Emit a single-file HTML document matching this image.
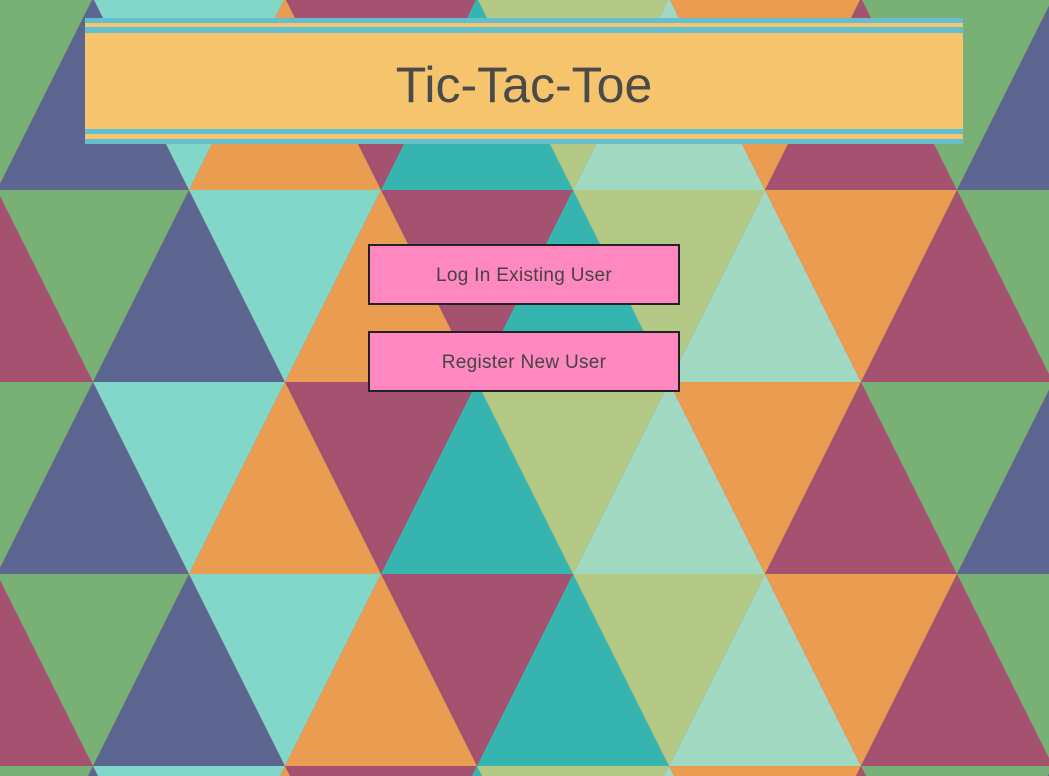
<!DOCTYPE html>
<html><head><meta charset="utf-8"><style>
html,body{margin:0;padding:0;width:1049px;height:776px;overflow:hidden;background:#a4526f}
svg.bg{position:absolute;left:0;top:0;display:block}
.banner{position:absolute;left:85px;top:18px;width:878px;height:126px;background:#f7c46e;overflow:hidden}
.s{position:absolute;left:0;width:100%;background:#62bfcf}
h1{position:absolute;left:0;top:0;width:100%;margin:0;text-align:center;font:50px "Liberation Sans",sans-serif;letter-spacing:0px;color:#4a4a4a;line-height:1;padding-top:42px}
.btn{position:absolute;left:368px;width:308px;height:57px;border:2px solid #222;background:#ff88c0;color:#444;font:19px "Liberation Sans",sans-serif;letter-spacing:0.3px;text-align:center;line-height:60px}
</style></head><body>
<svg class="bg" width="1049" height="776" viewBox="0 0 1049 776">
<defs><g id="r">
<polygon fill="#78b076" points="-99,-2 93,-2 -3,190"/>
<polygon fill="#5c6690" points="-3,190 189,190 93,-2"/>
<polygon fill="#82d8c8" points="93,-2 285,-2 189,190"/>
<polygon fill="#ea9c50" points="189,190 381,190 285,-2"/>
<polygon fill="#a4526f" points="285,-2 477,-2 381,190"/>
<polygon fill="#36b5b0" points="381,190 573,190 477,-2"/>
<polygon fill="#b3c985" points="477,-2 669,-2 573,190"/>
<polygon fill="#a0d8c2" points="573,190 765,190 669,-2"/>
<polygon fill="#ea9c50" points="669,-2 861,-2 765,190"/>
<polygon fill="#a4526f" points="765,190 957,190 861,-2"/>
<polygon fill="#78b076" points="861,-2 1053,-2 957,190"/>
<polygon fill="#5c6690" points="957,190 1149,190 1053,-2"/>
<polygon fill="#a4526f" points="-99,382 93,382 -3,190"/>
<polygon fill="#78b076" points="-3,190 189,190 93,382"/>
<polygon fill="#5c6690" points="93,382 285,382 189,190"/>
<polygon fill="#82d8c8" points="189,190 381,190 285,382"/>
<polygon fill="#ea9c50" points="285,382 477,382 381,190"/>
<polygon fill="#a4526f" points="381,190 573,190 477,382"/>
<polygon fill="#36b5b0" points="477,382 669,382 573,190"/>
<polygon fill="#b3c985" points="573,190 765,190 669,382"/>
<polygon fill="#a0d8c2" points="669,382 861,382 765,190"/>
<polygon fill="#ea9c50" points="765,190 957,190 861,382"/>
<polygon fill="#a4526f" points="861,382 1053,382 957,190"/>
<polygon fill="#78b076" points="957,190 1149,190 1053,382"/>
<polygon fill="#5c6690" points="1053,382 1245,382 1149,190"/>
</g></defs>
<use href="#r"/>
<use href="#r" transform="translate(0,384)"/>
<use href="#r" transform="translate(0,768)"/>
</svg>
<div class="banner">
<div class="s" style="top:0;height:5px"></div>
<div class="s" style="top:9px;height:6px"></div>
<div class="s" style="top:111px;height:5px"></div>
<div class="s" style="top:121px;height:5px"></div>
<h1>Tic-Tac-Toe</h1>
</div>
<div class="btn" style="top:244px">Log In Existing User</div>
<div class="btn" style="top:331px">Register New User</div>
</body></html>
